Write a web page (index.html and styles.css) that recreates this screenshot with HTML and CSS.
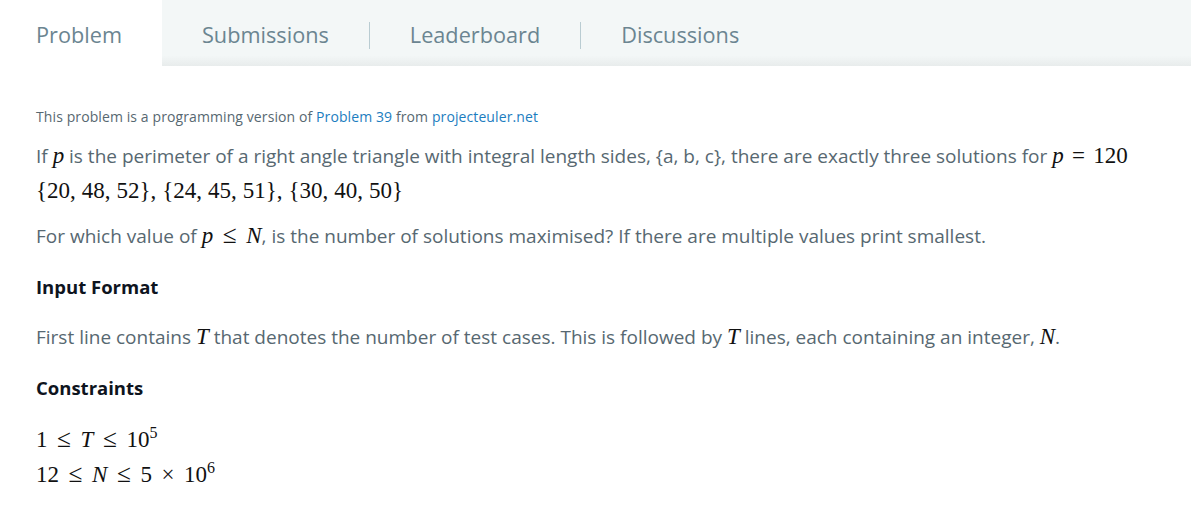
FILE: index.html
```html
<!DOCTYPE html>
<html>
<head>
<meta charset="utf-8">
<link rel="stylesheet" href="styles.css">
</head>
<body>
<nav class="tabs">
  <a class="tab active">Problem</a>
  <div class="tabrest">
    <a class="tab">Submissions</a>
    <span class="sep"></span>
    <a class="tab">Leaderboard</a>
    <span class="sep"></span>
    <a class="tab">Discussions</a>
  </div>
</nav>
<main class="content">
  <p class="note">This problem is a programming version of <a class="link">Problem 39</a> from <a class="link">projecteuler.net</a></p>
  <p class="para">If <span class="m i">p</span> is the perimeter of a right angle triangle with integral length sides, {a, b, c}, there are exactly three solutions for <span class="m"><span class="i">p</span><span class="eq">=</span>120</span><br><span class="m">{20,<span class="th"></span>48,<span class="th"></span>52},<span class="th"></span>{24,<span class="th"></span>45,<span class="th"></span>51},<span class="th"></span>{30,<span class="th"></span>40,<span class="th"></span>50}</span></p>
  <p class="para">For which value of <span class="m"><span class="i">p</span><span class="rel">≤</span><span class="i">N</span></span>, is the number of solutions maximised? If there are multiple values print smallest.</p>
  <h3 class="head">Input Format</h3>
  <p class="para">First line contains <span class="m i">T</span> that denotes the number of test cases. This is followed by <span class="m i">T</span> lines, each containing an integer, <span class="m i">N</span>.</p>
  <h3 class="head">Constraints</h3>
  <p class="para cons"><span class="m">1<span class="rel">≤</span><span class="i">T</span><span class="rel">≤</span>10<sup>5</sup></span><br><span class="m">12<span class="rel">≤</span><span class="i">N</span><span class="rel">≤</span>5<span class="bin">×</span>10<sup>6</sup></span></p>
</main>
</body>
</html>
```
FILE: styles.css
```css
html, body {
  margin: 0;
  padding: 0;
  background: #ffffff;
}
body {
  font-family: "Open Sans", "Noto Sans", sans-serif;
  color: #576871;
}
.tabs {
  display: flex;
  height: 66px;
}
.tab {
  display: flex;
  align-items: center;
  font-size: 21.7px;
  color: #6b8591;
  padding: 2px 40px 0 40px;
  height: 66px;
  box-sizing: border-box;
}
.tab.active {
  background: #ffffff;
  padding: 2px 40px 0 36px;
}
.tabrest {
  flex: 1;
  display: flex;
  align-items: center;
  background: linear-gradient(to bottom, #f3f7f7 0, #f3f7f7 84%, #e8ecec 100%);
}
.sep {
  width: 1px;
  height: 27px;
  margin-top: 4px;
  background: #b9ccd2;
}
.content {
  padding: 41px 36px 0 36px;
}
.note {
  font-size: 14px;
  letter-spacing: 0.1px;
  line-height: 20px;
  margin: 0 0 12px 0;
}
.link {
  color: #1c7dc0;
}
.para {
  font-size: 19px;
  line-height: 35px;
  margin: 0 0 10px 0;
}
.m {
  font-family: "Liberation Serif", "DejaVu Serif", serif;
  font-size: 23px;
  line-height: 1;
  color: #111;
}
.i {
  font-style: italic;
}
.rel {
  display: inline-block;
  font-size: 1.1em;
  margin: 0 0.38em;
}
.eq {
  display: inline-block;
  margin: 0 0.36em;
}
.bin {
  display: inline-block;
  margin: 0 0.41em;
}
.th {
  display: inline-block;
  width: 0.26em;
}
.m sup {
  font-size: 16px;
  line-height: 0;
  vertical-align: 9px;
}
.head {
  font-size: 18.5px;
  font-weight: 700;
  color: #0e141e;
  line-height: 35px;
  margin: 15px 0 16px 0;
}
.cons {
  margin-top: 18px;
}
```
